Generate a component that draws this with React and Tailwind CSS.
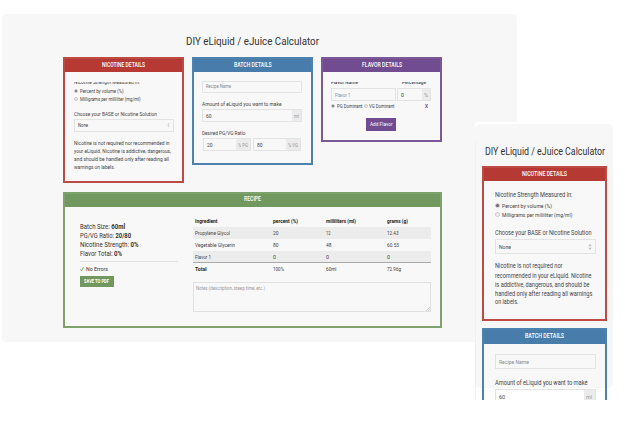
import { useLayoutEffect, useRef, useState } from "react";

// Single line of text, condensed or widened to the given width.
function T({ w, className = "", children }) {
  const ref = useRef(null);
  const [k, setK] = useState(1);
  useLayoutEffect(() => {
    const el = ref.current;
    el.style.transform = "none";
    const next = w / el.getBoundingClientRect().width;
    el.style.transform = `scaleX(${next})`;
    setK(next);
  }, [w]);
  return (
    <div className={`shrink-0 whitespace-nowrap ${className}`} style={{ width: w }}>
      <span ref={ref} className="inline-block origin-left -translate-y-[0.5px] align-top" style={{ transform: `scaleX(${k})` }}>
        {children}
      </span>
    </div>
  );
}

function Radio({ on, big }) {
  return (
    <span
      className={`flex shrink-0 items-center justify-center rounded-full border-[0.5px] border-[#c8c8c8] bg-[#eee] ${big ? "size-[5px]" : "size-[4px]"}`}
    >
      {on && <span className={`rounded-full bg-[#666] ${big ? "size-[3px]" : "size-[2px]"}`} />}
    </span>
  );
}

function Arrows({ className }) {
  return (
    <svg viewBox="0 0 4 6" className={className} fill="#bbb">
      <path d="M2 0 3.6 2.2H.4zM2 6 .4 3.8h3.2z" />
    </svg>
  );
}

function Field({ className = "", addon, addonClass = "", children }) {
  return (
    <div className={`flex shrink-0 border border-[#e3e3e3] ${className}`}>
      <div className="flex min-w-0 flex-1 items-center pl-[3px]">{children}</div>
      {addon && <div className={`flex shrink-0 items-center justify-center bg-[#ebebeb] text-[#999] ${addonClass}`}>{addon}</div>}
    </div>
  );
}

function Card({ tone, className = "", headClass = "h-[13px]", title, w, children }) {
  return (
    <section className={`flex shrink-0 flex-col border-2 ${tone} ${className}`}>
      <header className={`flex shrink-0 items-center justify-center pb-[2px] text-white ${headClass}`}>
        <T w={w} className="text-[6.4px] leading-[8px] font-medium">{title}</T>
      </header>
      <div className="flex min-h-0 flex-1 flex-col bg-[#f8f8f8]">{children}</div>
    </section>
  );
}

const RED = "border-[#bd4a44] bg-[#b63a33]";
const BLUE = "border-[#4e82ae] bg-[#487dab]";
const PURPLE = "border-[#7b5896] bg-[#724c90]";
const GREEN = "border-[#7ca36b] bg-[#71995f]";

const COLS = "grid shrink-0 grid-cols-[78px_52.5px_61.5px_1fr] items-center pl-[2px]";

const ROWS = [
  [["Propylene Glycol", 35], ["20", 5.5], ["12", 4.5], ["12.43", 11.5]],
  [["Vegetable Glycerin", 40], ["80", 5.5], ["48", 5.5], ["60.53", 12]],
  [["Flavor 1", 16], ["0", 3], ["0", 3], ["0", 3]],
];

function Desktop() {
  return (
    <main className="mt-[14px] ml-[2px] flex h-[328px] w-[515px] flex-col rounded-[4px] bg-[#f7f7f7] pl-[61px]">
      <div className="mt-[21px] h-[22px] pl-[123px]">
        <T w={133} className="text-[10.4px] leading-[13px] text-[#333]">DIY eLiquid / eJuice Calculator</T>
      </div>
      <div className="flex h-[134.5px] items-start gap-[8px]">
        <Card tone={RED} className="h-[126px] w-[121px]" title="NICOTINE DETAILS" w={43}>
          <div className="flex flex-col pl-[9px] text-[5.5px] leading-[8px] text-[#444]">
            <div className="mt-[10px] h-[4px] overflow-hidden">
              <T w={66} className="-mt-[4px] text-[6px]">Nicotine Strength Measured In:</T>
            </div>
            <div className="mt-[1.2px] flex h-[7.6px] items-center gap-[1.5px]">
              <Radio on />
              <T w={43.5}>Percent by volume (%)</T>
            </div>
            <div className="flex h-[7.6px] items-center gap-[1.5px]">
              <Radio />
              <T w={60.5}>Milligrams per milliliter (mg/ml)</T>
            </div>
            <T w={83} className="mt-[7.6px] text-[6px]">Choose your BASE or Nicotine Solution</T>
            <Field className="mt-[1px] h-[13px] w-[100px]">
              <T w={10}>None</T>
              <Arrows className="mr-[3px] ml-auto h-[4px] w-[3px]" />
            </Field>
            <div className="mt-[7px] text-[5.8px]">
              <T w={95.5}>Nicotine is not required nor recommended in</T>
              <T w={97}>your eLiquid. Nicotine is addictive, dangerous,</T>
              <T w={95}>and should be handled only after reading all</T>
              <T w={41}>warnings on labels.</T>
            </div>
          </div>
        </Card>
        <Card tone={BLUE} className="h-[108px] w-[121px]" title="BATCH DETAILS" w={37.5}>
          <div className="flex flex-col pl-[8px] text-[5.6px] leading-[8px] text-[#444]">
            <Field className="mt-[9px] h-[12px] w-[100px]">
              <T w={25} className="-mt-[2px] text-[5.2px] text-[#8a8a8a]">Recipe Name</T>
            </Field>
            <T w={79.5} className="mt-[7px] text-[6px]">Amount of eLiquid you want to make</T>
            <Field className="mt-[1px] h-[13px] w-[100px]" addonClass="w-[9px]" addon={<T w={5}>ml</T>}>
              <T w={5.5}>60</T>
            </Field>
            <T w={43.5} className="mt-[7px] text-[6px]">Desired PG/VG Ratio</T>
            <div className="mt-[1px] flex gap-[2px] pl-px">
              <Field className="h-[13px] w-[48px]" addonClass="w-[14px]" addon={<T w={10}>% PG</T>}>
                <T w={5.5}>20</T>
              </Field>
              <Field className="h-[13px] w-[48px]" addonClass="w-[14px]" addon={<T w={10}>% VG</T>}>
                <T w={5.5}>80</T>
              </Field>
            </div>
          </div>
        </Card>
        <Card tone={PURPLE} className="h-[85px] w-[121px]" title="FLAVOR DETAILS" w={40}>
          <div className="flex flex-col pl-[8px] text-[5.6px] leading-[8px] text-[#444]">
            <div className="mt-[10px] flex h-[4px] gap-[44px] overflow-hidden">
              <T w={27} className="-mt-[4px] font-medium">Flavor Name</T>
              <T w={24} className="-mt-[4px] font-medium">Percentage</T>
            </div>
            <div className="mt-[2px] flex gap-px">
              <Field className="h-[13px] w-[65px]">
                <T w={15.5} className="text-[#8a8a8a]">Flavor 1</T>
              </Field>
              <Field className="h-[13px] w-[34px]" addonClass="w-[8px]" addon={<T w={4}>%</T>}>
                <T w={3}>0</T>
              </Field>
            </div>
            <div className="mt-[1px] flex h-[8px] items-center gap-[1.5px] text-[5.4px]">
              <Radio on />
              <T w={25.5}>PG Dominant</T>
              <Radio />
              <T w={25.5}>VG Dominant</T>
              <T w={3} className="ml-[28.5px] font-bold text-[#724c90]">X</T>
            </div>
            <button className="mt-[7.5px] ml-[35px] flex h-[13px] w-[30px] items-center justify-center bg-[#724c90] text-white">
              <T w={22.5}>Add Flavor</T>
            </button>
          </div>
        </Card>
      </div>
      <Card tone={GREEN} className="h-[136.5px] w-[379px]" title="RECIPE" w={17}>
        <div className="flex">
          <div className="flex w-[128px] flex-col pt-[15.2px] pl-[14.5px] text-[7.2px] leading-[9.2px] text-[#333]">
            <T w={45}>Batch Size: <b>60ml</b></T>
            <T w={51}>PG/VG Ratio: <b>20/80</b></T>
            <T w={58.5}>Nicotine Strength: <b>0%</b></T>
            <T w={42}>Flavor Total: <b>0%</b></T>
            <div className="mt-[2.8px] h-px w-[98px] bg-[#e0e0e0]" />
            <div className="mt-[2.5px] flex items-center gap-[2px] text-[6.2px]">
              <svg viewBox="0 0 8 10" className="h-[6px] w-[4px]" fill="none" stroke="#71995f" strokeWidth="1.7">
                <path d="M1 6 3 9 7 1" />
              </svg>
              <T w={22}>No Errors</T>
            </div>
            <button className="mt-[2.2px] flex h-[10.5px] w-[34px] items-center justify-center bg-[#71995f] pb-[0.5px] text-white">
              <T w={25} className="text-[4.8px] font-bold">SAVE TO PDF</T>
            </button>
          </div>
          <div className="flex w-[238px] flex-col pt-[8.3px] text-[5.4px] leading-[8px] text-[#444]">
            <div className={`h-[12px] font-bold text-[#222] ${COLS}`}>
              <T w={22.5}>Ingredient</T>
              <T w={25}>percent (%)</T>
              <T w={30}>milliliters (ml)</T>
              <T w={21}>grams (g)</T>
            </div>
            {ROWS.map((row, i) => (
              <div key={i} className={`h-[12px] odd:bg-transparent even:bg-[#ececec] ${COLS}`}>
                {row.map(([text, w], j) => (
                  <T key={j} w={w}>{text}</T>
                ))}
              </div>
            ))}
            <div className={`-mt-[0.5px] h-[13px] border-t border-[#aaa] ${COLS}`}>
              <T w={11.5} className="font-bold text-[#222]">Total</T>
              <T w={11}>100%</T>
              <T w={10.5}>60ml</T>
              <T w={14}>72.96g</T>
            </div>
            <div className="mt-[6.5px] flex h-[30.5px] border border-[#e0e0e0] pt-[1.5px] pl-[2px]">
              <T w={69} className="text-[5px] text-[#999]">Notes (description, steep time, etc.)</T>
              <svg viewBox="0 0 4 4" className="mt-auto ml-auto size-[4px]" stroke="#aaa" strokeWidth=".6">
                <path d="M0 4 4 0M2 4 4 2" />
              </svg>
            </div>
          </div>
        </div>
      </Card>
    </main>
  );
}

function Phone() {
  return (
    <aside className="absolute top-[122px] left-[475px] h-[278px] w-[138px] overflow-hidden rounded-t-[4px] bg-white pt-[2px]">
      <div className="absolute top-[2px] left-0 h-[264px] w-[138px] rounded-[5px] bg-[#f7f7f7]" />
      <div className="absolute top-[20px] left-0 h-[258px] w-px bg-[#f0f0f0]" />
      <div className="relative flex flex-col pl-[7px] text-[#444]">
        <div className="mt-[21px] h-[21px] pl-[2.5px]">
          <T w={120} className="text-[10.4px] leading-[13px] text-[#333]">DIY eLiquid / eJuice Calculator</T>
        </div>
        <Card tone={RED} className="h-[155px] w-[125px]" title="NICOTINE DETAILS" w={45}>
          <div className="flex flex-col pl-[10.5px] text-[6px] leading-[8px]">
            <T w={77.5} className="mt-[10px] text-[6.4px]">Nicotine Strength Measured In:</T>
            <div className="mt-[2px] flex h-[9px] items-center gap-[2px]">
              <Radio on big />
              <T w={50}>Percent by volume (%)</T>
            </div>
            <div className="flex h-[9px] items-center gap-[2px]">
              <Radio big />
              <T w={70.5}>Milligrams per milliliter (mg/ml)</T>
            </div>
            <T w={96.5} className="mt-[9.5px] text-[6.4px]">Choose your BASE or Nicotine Solution</T>
            <Field className="mt-[2.5px] h-[15px] w-[101px]">
              <T w={12}>None</T>
              <Arrows className="mr-[3px] ml-auto h-[6px] w-[4px]" />
            </Field>
            <div className="mt-[8.4px] text-[6.4px] leading-[9.2px]">
              <T w={67.5}>Nicotine is not required nor</T>
              <T w={96.5}>recommended in your eLiquid. Nicotine</T>
              <T w={94.5}>is addictive, dangerous, and should be</T>
              <T w={97.5}>handled only after reading all warnings</T>
              <T w={23.5} className="-mt-[1.4px]">on labels.</T>
            </div>
          </div>
        </Card>
        <Card tone={BLUE} className="mt-[7px] h-[90px] w-[125px]" headClass="h-[14px]" title="BATCH DETAILS" w={39}>
          <div className="flex h-full flex-col bg-linear-to-b from-[#f8f8f8] from-[44px] to-white to-[44px] pl-[10.5px] text-[6.2px] leading-[8px]">
            <Field className="mt-[10px] h-[15px] w-[101px]">
              <T w={30} className="text-[#8a8a8a]">Recipe Name</T>
            </Field>
            <T w={92.5} className="mt-[10px] text-[6.4px]">Amount of eLiquid you want to make</T>
            <Field className="mt-[2px] h-[15px] w-[101px]" addonClass="w-[11px]" addon={<T w={6}>ml</T>}>
              <T w={6}>60</T>
            </Field>
          </div>
        </Card>
      </div>
    </aside>
  );
}

export default function App() {
  return (
    <div className="relative flex h-[427px] w-[625px] items-start overflow-hidden bg-white font-['Roboto','Open_Sans',sans-serif]">
      <Desktop />
      <Phone />
    </div>
  );
}
